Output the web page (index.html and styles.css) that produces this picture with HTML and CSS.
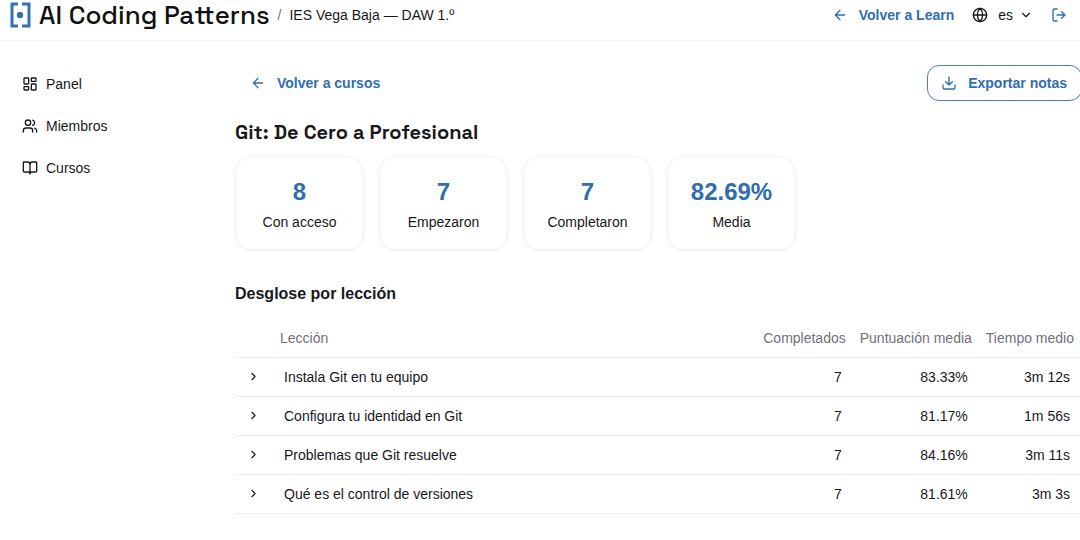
FILE: index.html
```html
<!DOCTYPE html>
<html lang="es">
<head>
  <meta charset="UTF-8" />
  <meta name="viewport" content="width=device-width, initial-scale=1.0" />
  <title>Git: De Cero a Profesional</title>
  <link rel="stylesheet" href="styles.css">
</head>
<body>
  <header class="topbar">
    <a href="#" class="brand">
      <svg class="logo" viewBox="0 0 22 26" aria-hidden="true">
        <path d="M9 2H3V24H9M13 2H20V24H13" fill="none" stroke="currentColor" stroke-width="3" />
        <circle cx="11" cy="13" r="3.200" fill="currentColor" />
      </svg>
      <span>AI Coding Patterns</span>
    </a>
    <span class="slash">/</span>
    <span class="org">IES Vega Baja — DAW 1.º</span>

    <div class="actions">
      <a href="#" class="back-link">
        <svg class="icon" viewBox="0 0 24 24"><path d="m12 19-7-7 7-7M19 12H5" /></svg>
        Volver a Learn
      </a>
      <button type="button" class="lang">
        <svg class="icon" viewBox="0 0 24 24"><circle cx="12" cy="12" r="10" /><path d="M12 2a14.500 14.500 0 0 0 0 20 14.500 14.500 0 0 0 0-20M2 12h20" /></svg>
        <span>es</span>
        <svg class="icon chevron" viewBox="0 0 24 24"><path d="m6 9 6 6 6-6" /></svg>
      </button>
      <button type="button" class="logout" aria-label="Cerrar sesión">
        <svg class="icon" viewBox="0 0 24 24"><path d="M9 3H5a2 2 0 0 0-2 2v14a2 2 0 0 0 2 2h4M16 17l5-5-5-5M21 12H9" /></svg>
      </button>
    </div>
  </header>

  <div class="layout">
    <nav class="sidebar">
      <a href="#">
        <svg class="icon" viewBox="0 0 24 24"><rect x="3" y="3" width="7" height="9" rx="1" /><rect x="14" y="3" width="7" height="5" rx="1" /><rect x="14" y="12" width="7" height="9" rx="1" /><rect x="3" y="16" width="7" height="5" rx="1" /></svg>
        Panel
      </a>
      <a href="#">
        <svg class="icon" viewBox="0 0 24 24"><path d="M16 21v-2a4 4 0 0 0-4-4H6a4 4 0 0 0-4 4v2" /><circle cx="9" cy="7" r="4" /><path d="M22 21v-2a4 4 0 0 0-3-3.870M16 3.130a4 4 0 0 1 0 7.750" /></svg>
        Miembros
      </a>
      <a href="#">
        <svg class="icon" viewBox="0 0 24 24"><path d="M12 7v14M3 18a1 1 0 0 1-1-1V4a1 1 0 0 1 1-1h5a4 4 0 0 1 4 4 4 4 0 0 1 4-4h5a1 1 0 0 1 1 1v13a1 1 0 0 1-1 1h-6a3 3 0 0 0-3 3 3 3 0 0 0-3-3z" /></svg>
        Cursos
      </a>
    </nav>

    <main class="content">
      <div class="toolbar">
        <a href="#" class="back-link">
          <svg class="icon" viewBox="0 0 24 24"><path d="m12 19-7-7 7-7M19 12H5" /></svg>
          Volver a cursos
        </a>
        <button type="button" class="export">
          <svg class="icon" viewBox="0 0 24 24"><path d="M21 15v4a2 2 0 0 1-2 2H5a2 2 0 0 1-2-2v-4M7 10l5 5 5-5M12 15V3" /></svg>
          Exportar notas
        </button>
      </div>

      <h1>Git: De Cero a Profesional</h1>

      <div class="stats">
        <div class="stat"><strong>8</strong><span>Con acceso</span></div>
        <div class="stat"><strong>7</strong><span>Empezaron</span></div>
        <div class="stat"><strong>7</strong><span>Completaron</span></div>
        <div class="stat"><strong>82.69%</strong><span>Media</span></div>
      </div>

      <h2>Desglose por lección</h2>

      <table class="lessons">
        <thead>
          <tr>
            <th class="toggle-col"></th>
            <th class="name">Lección</th>
            <th>Completados</th>
            <th>Puntuación media</th>
            <th>Tiempo medio</th>
          </tr>
        </thead>
        <tbody>
          <tr>
            <td class="toggle-col"><button type="button" class="toggle" aria-label="Desplegar"><svg class="icon" viewBox="0 0 24 24"><path d="m9 18 6-6-6-6" /></svg></button></td>
            <td class="name">Instala Git en tu equipo</td>
            <td>7</td>
            <td>83.33%</td>
            <td>3m 12s</td>
          </tr>
          <tr>
            <td class="toggle-col"><button type="button" class="toggle" aria-label="Desplegar"><svg class="icon" viewBox="0 0 24 24"><path d="m9 18 6-6-6-6" /></svg></button></td>
            <td class="name">Configura tu identidad en Git</td>
            <td>7</td>
            <td>81.17%</td>
            <td>1m 56s</td>
          </tr>
          <tr>
            <td class="toggle-col"><button type="button" class="toggle" aria-label="Desplegar"><svg class="icon" viewBox="0 0 24 24"><path d="m9 18 6-6-6-6" /></svg></button></td>
            <td class="name">Problemas que Git resuelve</td>
            <td>7</td>
            <td>84.16%</td>
            <td>3m 11s</td>
          </tr>
          <tr>
            <td class="toggle-col"><button type="button" class="toggle" aria-label="Desplegar"><svg class="icon" viewBox="0 0 24 24"><path d="m9 18 6-6-6-6" /></svg></button></td>
            <td class="name">Qué es el control de versiones</td>
            <td>7</td>
            <td>81.61%</td>
            <td>3m 3s</td>
          </tr>
        </tbody>
      </table>
    </main>
  </div>
</body>
</html>
```
FILE: styles.css
```css
* {
  box-sizing: border-box;
}

body {
  margin: 0;
  background: #fff;
  color: #18181b;
  font-family: "Liberation Sans", Arial, sans-serif;
  font-size: 14px;
  line-height: 20px;
  overflow-x: hidden;
}

a {
  color: inherit;
  text-decoration: none;
}

button {
  border: 0;
  padding: 0;
  background: none;
  color: inherit;
  font: inherit;
  cursor: pointer;
}

.icon {
  flex: none;
  width: 16px;
  height: 16px;
  fill: none;
  stroke: currentColor;
  stroke-width: 2;
  stroke-linecap: round;
  stroke-linejoin: round;
}

/* Header */
.topbar {
  display: flex;
  align-items: center;
  padding: 0 13px 10px 9px;
  border-bottom: 1px solid #f1f1f3;
}

.brand {
  display: flex;
  align-items: center;
  gap: 8px;
  color: #111;
  font-family: "Space Grotesk", Inter, sans-serif;
  font-size: 26px;
  font-weight: 500;
  line-height: 30px;
}

.logo {
  width: 22px;
  height: 26px;
  color: #3572b0;
}

.slash {
  margin: 0 8px;
  color: #71717a;
}

.actions {
  display: flex;
  align-items: center;
  margin-left: auto;
}

.back-link {
  display: flex;
  align-items: center;
  gap: 11px;
  color: #2f6db0;
  font-weight: 700;
}

.lang {
  display: flex;
  align-items: center;
  gap: 10px;
  margin: 0 18px;
}

.lang .chevron {
  width: 14px;
  height: 14px;
  margin-left: -4px;
}

.logout {
  display: flex;
  color: #2f6db0;
}

/* Page */
.layout {
  display: flex;
}

.sidebar {
  display: flex;
  flex-direction: column;
  flex: none;
  gap: 22px;
  width: 235px;
  padding: 33px 22px;
}

.sidebar a {
  display: flex;
  align-items: center;
  gap: 8px;
}

.content {
  flex: 1;
  min-width: 0;
  margin-right: -2px;
  padding-top: 24px;
}

.toolbar {
  display: flex;
  align-items: center;
  justify-content: space-between;
}

.toolbar .back-link {
  padding-left: 15px;
}

.export {
  display: flex;
  align-items: center;
  gap: 11px;
  height: 36px;
  padding: 0 14px 0 13px;
  border: 1px solid #4a80ba;
  border-radius: 12px;
  color: #2f6db0;
  font-weight: 700;
}

h1 {
  margin: 17px 0 10px;
  font-family: "Space Grotesk", Inter, sans-serif;
  font-size: 20px;
  font-weight: 600;
  line-height: 28px;
}

.stats {
  display: flex;
  gap: 15px;
}

.stat {
  display: flex;
  flex-direction: column;
  align-items: center;
  gap: 5px;
  width: 129px;
  padding: 20px 0 17px;
  border: 1px solid #f1f1f3;
  border-radius: 16px;
  box-shadow: 0 1px 2px rgba(0, 0, 0, 0.06);
}

.stat strong {
  color: #2f6db0;
  font-size: 24px;
  line-height: 30px;
}

h2 {
  margin: 32px 0 13px;
  font-size: 16px;
  line-height: 24px;
}

/* Lessons table */
.lessons {
  width: 100%;
  border-collapse: collapse;
}

.lessons tr {
  border-bottom: 1px solid #ededf0;
}

.lessons th,
.lessons td {
  height: 39px;
  padding: 0 12px;
  text-align: right;
  white-space: nowrap;
}

.lessons th {
  height: 38px;
  padding: 0 8px 0 6px;
  color: #71717a;
  font-weight: 400;
}

.lessons .toggle-col {
  width: 36px;
  text-align: left;
}

.lessons .name {
  width: 99%;
  text-align: left;
}

.lessons th.name {
  padding-left: 8px;
}

.toggle {
  display: flex;
}

.toggle .icon {
  width: 13px;
  height: 13px;
}
```
